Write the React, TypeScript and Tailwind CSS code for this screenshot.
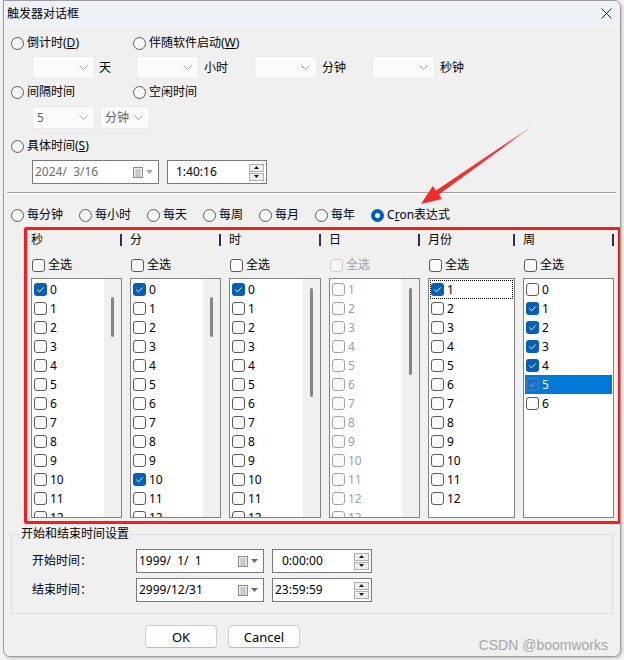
import React from "react";

const CHECK = (
  <svg width="13" height="13" viewBox="0 0 13 13" className="block">
    <path d="M3.3 6.7 L5.5 8.8 L9.7 4.5" stroke="white" strokeWidth="1" fill="none" />
  </svg>
);

function Radio({ on }: { on?: boolean }) {
  return on ? (
    <span className="w-[13px] h-[13px] rounded-full bg-[#005fb8] flex items-center justify-center shrink-0">
      <span className="w-[5px] h-[5px] rounded-full bg-white" />
    </span>
  ) : (
    <span className="w-[13px] h-[13px] rounded-full border border-[#5c5c5c] bg-[#f6f6f6] shrink-0" />
  );
}

function Check({ on, disabled, hl }: { on?: boolean; disabled?: boolean; hl?: boolean }) {
  if (hl)
    return (
      <span className="w-[13px] h-[13px] rounded-[3px] bg-[#1c6fc4] border border-[#3b84cf] shrink-0">
        <svg width="11" height="11" viewBox="0 0 13 13" className="block">
          <path d="M3.3 6.7 L5.5 8.8 L9.7 4.5" stroke="#8cb3de" strokeWidth="1" fill="none" />
        </svg>
      </span>
    );
  if (on) return <span className="w-[13px] h-[13px] rounded-[3px] bg-[#005fb8] shrink-0">{CHECK}</span>;
  return (
    <span
      className={`w-[13px] h-[13px] rounded-[3px] border shrink-0 ${
        disabled ? "border-[#a3a3a3] bg-[#fafafa]" : "border-[#5c5c5c] bg-[#fbfbfb]"
      }`}
    />
  );
}

function Chevron() {
  return (
    <svg width="9" height="5" viewBox="0 0 9 5">
      <path d="M0.5 0.5 L4.5 4.5 L8.5 0.5" stroke="#a9a9a9" strokeWidth="1" fill="none" />
    </svg>
  );
}

function Combo({ className, text }: { className: string; text?: string }) {
  return (
    <div
      className={`h-[23px] bg-[#fbfbfb] border border-[#e9e9e9] rounded-[3px] flex items-center justify-between pl-[4px] pr-[6px] ${className}`}
    >
      <span className="text-[#616161]">{text}</span>
      <Chevron />
    </div>
  );
}

function CalIcon() {
  return (
    <svg width="10" height="11" viewBox="0 0 10 11">
      <rect x="0.5" y="0.5" width="9" height="10" fill="#ececec" stroke="#8c8c8c" />
      <path d="M2 3 H8 M2 5 H8 M2 7 H8 M2 9 H8 M3.5 2 V10 M5 2 V10 M6.5 2 V10" stroke="#b8b8b8" strokeWidth="0.7" />
    </svg>
  );
}

function DateBox({ className, text, disabled }: { className: string; text: string; disabled?: boolean }) {
  return (
    <div className={`h-[24px] bg-white border border-[#7a7a7a] flex items-center justify-between pl-[2px] pr-[5px] ${className}`}>
      <span className={`whitespace-pre ${disabled ? "text-[#6d6d6d]" : "text-black"}`}>{text}</span>
      <span className="flex items-center gap-[3px]">
        <CalIcon />
        <svg width="7" height="4" viewBox="0 0 7 4">
          <path d="M0 0 H7 L3.5 4 Z" fill={disabled ? "#a6a6a6" : "#5b6b8c"} />
        </svg>
      </span>
    </div>
  );
}

function Spin() {
  return (
    <span className="flex flex-col gap-[1px]">
      {[0, 1].map((i) => (
        <span key={i} className="w-[15px] h-[8px] border border-[#adadad] bg-[#efefef] flex items-center justify-center">
          <svg width="5" height="3" viewBox="0 0 5 3">
            <path d={i === 0 ? "M0 3 H5 L2.5 0 Z" : "M0 0 H5 L2.5 3 Z"} fill="#1a1a1a" />
          </svg>
        </span>
      ))}
    </span>
  );
}

function TimeBox({ className, text, pad }: { className: string; text: string; pad: string }) {
  return (
    <div className={`h-[24px] bg-white border border-[#7a7a7a] flex items-center justify-between pr-[2px] ${className}`}>
      <span className={pad}>{text}</span>
      <Spin />
    </div>
  );
}

type Col = {
  title: string;
  w: string;
  items: number[];
  checked: number[];
  disabled?: boolean;
  thumb?: string;
  focus?: number;
  hl?: number;
};

const cols: Col[] = [
  { title: "秒", w: "w-[91px]", items: Array.from({ length: 13 }, (_, i) => i), checked: [0], thumb: "mt-[18px] h-[40px]" },
  { title: "分", w: "w-[91px]", items: Array.from({ length: 13 }, (_, i) => i), checked: [0, 10], thumb: "mt-[18px] h-[40px]" },
  { title: "时", w: "w-[92px]", items: Array.from({ length: 13 }, (_, i) => i), checked: [0], thumb: "mt-[9px] h-[109px]" },
  { title: "日", w: "w-[91px]", items: Array.from({ length: 13 }, (_, i) => i + 1), checked: [], disabled: true, thumb: "mt-[9px] h-[87px]" },
  { title: "月份", w: "w-[87px]", items: Array.from({ length: 12 }, (_, i) => i + 1), checked: [1], focus: 1 },
  { title: "周", w: "w-[91px]", items: Array.from({ length: 7 }, (_, i) => i), checked: [1, 2, 3, 4, 5], hl: 5 },
];

function Column({ c }: { c: Col }) {
  return (
    <div className={`${c.w} shrink-0 flex flex-col`}>
      <div className="mt-[2px] h-[16px] flex items-center justify-between">
        <span>{c.title}</span>
        <span className="w-[2px] h-[12px] bg-[#362a55]" />
      </div>
      <div className="mt-[9px] h-[16px] flex items-center gap-[3px] pl-[1px]">
        <span
          className={`w-[13px] h-[13px] rounded-[3px] border ${
            c.disabled ? "border-[#cdcdcd] bg-[#f6f6f6]" : "border-[#5c5c5c] bg-[#fbfbfb]"
          }`}
        />
        <span className={c.disabled ? "text-[#a0a0a0]" : ""}>全选</span>
      </div>
      <div className="mt-[5px] h-[240px] border border-[#838383] bg-white flex overflow-hidden">
        <div className="flex-1 pt-[1px] px-[1px]">
          {c.items.map((n) => {
            const hl = c.hl === n;
            const focus = c.focus === n;
            return (
              <div
                key={n}
                className={`h-[19px] flex items-center gap-[3px] pl-[1px] ${hl ? "bg-[#0078d7] text-white" : ""} ${
                  focus ? "outline outline-1 outline-dotted outline-black -outline-offset-1" : ""
                } ${c.disabled ? "text-[#a0a0a0]" : ""}`}
              >
                <Check on={c.checked.includes(n)} disabled={c.disabled} hl={hl} />
                <span>{n}</span>
              </div>
            );
          })}
        </div>
        {c.thumb && (
          <div className="w-[17px] shrink-0 bg-[#f0f0f0] flex flex-col">
            <span className={`w-[3px] ml-[7px] rounded-full bg-[#868686] ${c.thumb}`} />
          </div>
        )}
      </div>
    </div>
  );
}

export default function App() {
  const freq = ["每分钟", "每小时", "每天", "每周", "每月", "每年"];
  return (
    <div className="w-[624px] h-[660px] relative overflow-hidden bg-[#f3f3f3] text-[12px] leading-[16px] text-black font-['Noto_Sans','Noto_Sans_CJK_SC',sans-serif]">
      <div className="ml-[3px] w-[618px] h-[657px] border border-[#9c9c9c] rounded-tr-[7px] rounded-b-[7px] bg-[#f0f0f0] overflow-hidden flex flex-col shadow-[1px_1px_3px_rgba(0,0,0,0.25)]">
        {/* title bar */}
        <div className="h-[25px] shrink-0 bg-[#eef2f7] flex items-center justify-between pl-[3px] pr-[8px]">
          <span>触发器对话框</span>
          <svg width="11" height="11" viewBox="0 0 11 11">
            <path d="M0.5 0.5 L10.5 10.5 M10.5 0.5 L0.5 10.5" stroke="#1a1a1a" strokeWidth="1" />
          </svg>
        </div>

        <div className="pl-[7px] flex flex-col">
          {/* countdown / startup */}
          <div className="mt-[9px] h-[16px] flex items-center">
            <div className="w-[122px] flex items-center gap-[3px]">
              <Radio />
              <span>
                倒计时(<u>D</u>)
              </span>
            </div>
            <div className="flex items-center gap-[3px]">
              <Radio />
              <span>
                伴随软件启动(<u>W</u>)
              </span>
            </div>
          </div>
          <div className="mt-[5px] pl-[21px] flex items-center">
            <div className="w-[104px] flex items-center">
              <Combo className="w-[63px]" />
              <span className="ml-[4px]">天</span>
            </div>
            <div className="w-[118px] flex items-center">
              <Combo className="w-[63px]" />
              <span className="ml-[5px]">小时</span>
            </div>
            <div className="w-[118px] flex items-center">
              <Combo className="w-[63px]" />
              <span className="ml-[5px]">分钟</span>
            </div>
            <div className="flex items-center">
              <Combo className="w-[63px]" />
              <span className="ml-[5px]">秒钟</span>
            </div>
          </div>

          {/* interval / idle */}
          <div className="mt-[5px] h-[16px] flex items-center">
            <div className="w-[122px] flex items-center gap-[3px]">
              <Radio />
              <span>间隔时间</span>
            </div>
            <div className="flex items-center gap-[3px]">
              <Radio />
              <span>空闲时间</span>
            </div>
          </div>
          <div className="mt-[6px] pl-[21px] flex items-center">
            <Combo className="w-[63px]" text="5" />
            <Combo className="w-[50px] ml-[5px]" text="分钟" />
          </div>

          {/* specific time */}
          <div className="mt-[9px] h-[16px] flex items-center gap-[3px]">
            <Radio />
            <span>
              具体时间(<u>S</u>)
            </span>
          </div>
          <div className="mt-[6px] pl-[21px] flex items-center">
            <DateBox className="w-[127px]" text="2024/  3/16" disabled />
            <TimeBox className="w-[100px] ml-[8px]" text="1:40:16" pad="pl-[8px]" />
          </div>

          <div className="mt-[8px] mr-[4px] -ml-[4px] h-[2px] border-t border-[#a0a0a0] border-b border-b-white" />

          {/* frequency */}
          <div className="mt-[13px] h-[16px] flex items-center gap-[16px]">
            {freq.map((f) => (
              <div key={f} className="flex items-center gap-[3px]">
                <Radio />
                <span>{f}</span>
              </div>
            ))}
            <div className="flex items-center gap-[3px]">
              <Radio on />
              <span>
                C<u>r</u>on表达式
              </span>
            </div>
          </div>

          {/* cron columns */}
          <div className="mt-[4px] ml-[13px] w-[597px] h-[297px] shrink-0 border-[3px] border-[#fb1b1b] rounded-[2px] pl-[4px] flex gap-[8px]">
            {cols.map((c) => (
              <Column key={c.title} c={c} />
            ))}
          </div>

          {/* range */}
          <fieldset className="mt-[2px] w-[602px] border border-[#dcdcdc] pb-[11px]">
            <legend className="ml-[8px] px-[1px] leading-[16px]">开始和结束时间设置</legend>
            <div className="mt-[7px] pl-[20px] flex items-center">
              <span className="w-[104px]">开始时间：</span>
              <DateBox className="w-[128px]" text="1999/  1/  1" />
              <TimeBox className="w-[100px] ml-[8px]" text="0:00:00" pad="pl-[9px]" />
            </div>
            <div className="mt-[5px] pl-[20px] flex items-center">
              <span className="w-[104px]">结束时间：</span>
              <DateBox className="w-[128px]" text="2999/12/31" />
              <TimeBox className="w-[100px] ml-[8px]" text="23:59:59" pad="pl-[2px]" />
            </div>
          </fieldset>

          <div className="mt-[11px] ml-[134px] flex gap-[11px]">
            <button className="w-[72px] h-[23px] rounded-[4px] border border-[#d0d0d0] border-b-[#b8b8b8] bg-[#fdfdfd] text-[13px]">
              OK
            </button>
            <button className="w-[72px] h-[23px] rounded-[4px] border border-[#d0d0d0] border-b-[#b8b8b8] bg-[#fdfdfd] text-[13px]">
              Cancel
            </button>
          </div>
        </div>
      </div>

      <span className="absolute right-[16px] bottom-[6px] text-[14px] leading-[18px] text-[#a5a5a5] font-['Liberation_Sans',sans-serif]">
        CSDN @boomworks
      </span>

      <svg className="absolute left-0 top-0 pointer-events-none" width="624" height="660">
        <defs>
          <linearGradient id="ag" x1="531" y1="127" x2="421" y2="204" gradientUnits="userSpaceOnUse">
            <stop offset="0" stopColor="#f25050" stopOpacity="0.2" />
            <stop offset="0.25" stopColor="#f03a3a" />
            <stop offset="1" stopColor="#ef2a2a" />
          </linearGradient>
        </defs>
        <polygon
          points="530.8,126.7 436.0,190.5 432.8,185.9 421,204 442.0,199.1 438.8,194.6 531.2,127.3"
          fill="url(#ag)"
        />
      </svg>
    </div>
  );
}
